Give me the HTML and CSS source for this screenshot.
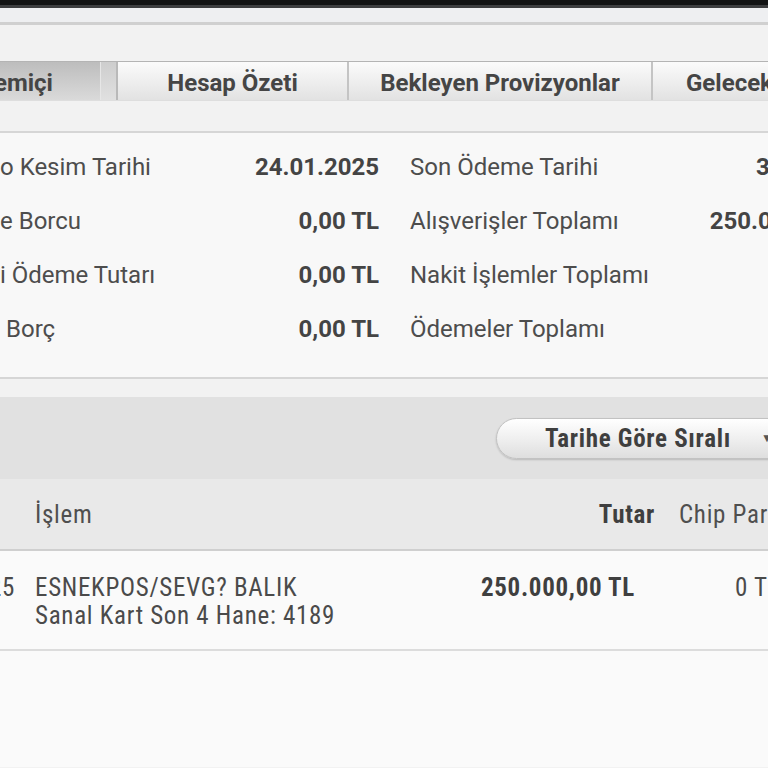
FILE: index.html
```html
<!DOCTYPE html>
<html lang="tr">
<head>
<meta charset="utf-8">
<title>Ekstre</title>
<link rel="stylesheet" href="styles.css">
</head>
<body>
<div class="topbar"></div>
<div class="subbar"></div>
<div class="tabs">
  <div class="tab tab-active">emiçi</div>
  <div class="tab-gap"></div>
  <div class="tab tab-2">Hesap Özeti</div>
  <div class="tab tab-3">Bekleyen Provizyonlar</div>
  <div class="tab tab-4">Gelecek Dönem</div>
</div>
<section class="summary">
  <div class="col col-left">
    <div class="row"><span class="label">o Kesim Tarihi</span><span class="value">24.01.2025</span></div>
    <div class="row"><span class="label">e Borcu</span><span class="value">0,00 TL</span></div>
    <div class="row"><span class="label">i Ödeme Tutarı</span><span class="value">0,00 TL</span></div>
    <div class="row"><span class="label label-indent">Borç</span><span class="value">0,00 TL</span></div>
  </div>
  <div class="col col-right">
    <div class="row"><span class="label">Son Ödeme Tarihi</span><span class="value">31.01.2025</span></div>
    <div class="row"><span class="label">Alışverişler Toplamı</span><span class="value value-wide">250.000,00 TL</span></div>
    <div class="row"><span class="label">Nakit İşlemler Toplamı</span><span class="value"></span></div>
    <div class="row"><span class="label">Ödemeler Toplamı</span><span class="value"></span></div>
  </div>
</section>
<div class="sortbar">
  <button class="sort-btn"><span class="sort-text">Tarihe Göre Sıralı</span><span class="sort-arrow">▼</span></button>
</div>
<div class="tx-head">
  <div class="c-date"></div>
  <div class="c-desc">İşlem</div>
  <div class="c-amount">Tutar</div>
  <div class="c-chip">Chip Para</div>
</div>
<div class="tx-row">
  <div class="c-date"><span>24.01.2025</span></div>
  <div class="c-desc">ESNEKPOS/SEVG? BALIK<br>Sanal Kart Son 4 Hane: 4189</div>
  <div class="c-amount">250.000,00 TL</div>
  <div class="c-chip">0 TL</div>
</div>
<div class="rest"></div>
</body>
</html>
```
FILE: styles.css
```css
html, body {
  margin: 0;
  padding: 0;
  overflow: hidden;
  width: 768px;
  height: 768px;
}
body {
  background: #f2f2f2;
  font-family: Roboto, "Noto Sans", sans-serif;
  color: #4a4a4a;
}
.topbar {
  height: 5px;
  background: #121314;
  border-bottom: 3px solid #3d3e40;
}
.subbar {
  height: 14px;
  background: #eeeff1;
  border-bottom: 3px solid #d0d0d0;
  margin-bottom: 36px;
}
.tabs {
  display: flex;
  height: 38px;
  border-top: 1px solid #b4b4b4;
  border-bottom: 1px solid #dedede;
  white-space: nowrap;
}
.tab {
  display: flex;
  align-items: center;
  justify-content: center;
  padding-top: 3px;
  box-sizing: border-box;
  font-weight: 700;
  font-size: 24px;
  color: #454545;
  background: linear-gradient(#fbfbfb, #e2e2e2);
  border-left: 2px solid #c4c4c4;
  flex: none;
}
.tab-active {
  width: 100px;
  justify-content: flex-start;
  border-left: none;
  text-indent: -6px;
  background: linear-gradient(#bdbdbd, #dadada);
}
.tab-gap {
  width: 15px;
  background: linear-gradient(#cdcdcd, #e0e0e0);
  border-left: 1px solid #e6e6e6;
  flex: none;
}
.tab-2 { width: 231px; border-left-color: #b9b9b9; }
.tab-3 { width: 304px; }
.tab-4 { width: 200px; justify-content: flex-start; padding-left: 33px; }

.summary {
  margin-top: 30px;
  display: flex;
  gap: 31px;
  background: #f8f8f8;
  border-top: 2px solid #d6d6d6;
  border-bottom: 2px solid #d6d6d6;
  padding: 7px 0 21px;
  white-space: nowrap;
}
.col { display: flex; flex-direction: column; flex: none; }
.col-left { width: 379px; }
.col-right { width: 470px; }
.row {
  display: flex;
  justify-content: space-between;
  align-items: center;
  height: 54px;
  font-size: 24px;
}
.label { color: #4d4d4d; }
.label-indent { padding-left: 6px; }
.value { font-weight: 700; color: #444; }
.value-wide { margin-right: 14px; }

.sortbar {
  margin-top: 18px;
  height: 82px;
  background: #e1e1e1;
  display: flex;
  align-items: center;
  padding-left: 496px;
}
.sort-btn {
  flex: none;
  display: flex;
  align-items: center;
  height: 41px;
  width: 330px;
  padding: 0 0 0 48px;
  border: 1px solid #c2c2c2;
  border-radius: 21px;
  background: linear-gradient(#ffffff, #ececec 60%, #dedede);
  box-shadow: 0 1px 2px rgba(0,0,0,0.18);
  font-family: "Roboto Condensed", Roboto, sans-serif;
  font-stretch: condensed;
  font-weight: 700;
  font-size: 25px;
  letter-spacing: 0.7px;
  color: #3f3f3f;
  white-space: nowrap;
}
.sort-arrow {
  margin-left: 30px;
  font-size: 12px;
  letter-spacing: 0;
  color: #555;
}

.tx-head, .tx-row {
  display: grid;
  grid-template-columns: 35px 440px 180px 200px;
  font-family: "Roboto Condensed", Roboto, sans-serif;
  font-stretch: condensed;
  font-size: 25px;
  letter-spacing: 0.7px;
  white-space: nowrap;
}
.tx-head {
  height: 70px;
  align-items: center;
  background: #e9e9e9;
  border-bottom: 2px solid #cfcfcf;
  color: #4f4f4f;
}
.tx-head .c-amount { text-align: right; font-weight: 700; color: #3f3f3f; }
.tx-head .c-chip { padding-left: 24px; }
.tx-row {
  background: #fafafa;
  border-bottom: 2px solid #dcdcdc;
  padding: 23px 0 19px;
  line-height: 28px;
  color: #4a4a4a;
}
.c-date {
  display: flex;
  justify-content: flex-end;
  padding-right: 20px;
  min-width: 0;
}
.c-date span { flex: none; }
.tx-row .c-amount { text-align: right; padding-right: 20px; font-weight: 700; color: #3f3f3f; }
.tx-row .c-chip { padding-left: 80px; }
.rest {
  height: 116px;
  background: #fafafa;
}
```
